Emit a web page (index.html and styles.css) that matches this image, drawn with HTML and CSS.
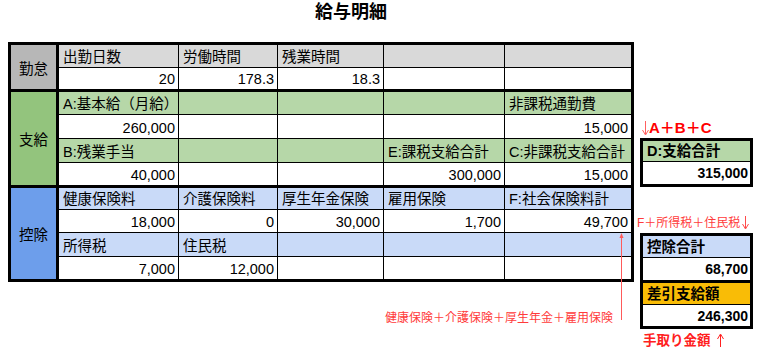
FILE: index.html
```html
<!DOCTYPE html>
<html lang="ja">
<head>
<meta charset="utf-8">
<title>給与明細</title>
<link rel="stylesheet" href="styles.css">
</head>
<body>
<main class="page">
  <h1 class="title">給与明細</h1>
  <div class="body">
    <div class="left">
      <div class="sheet">
        <div class="section sec-att">
          <div class="label grey">勤怠</div>
          <div class="cells">
            <div class="c h-grey">出勤日数</div>
            <div class="c h-grey">労働時間</div>
            <div class="c h-grey">残業時間</div>
            <div class="c h-grey"></div>
            <div class="c h-grey"></div>
            <div class="c n">20</div>
            <div class="c n">178.3</div>
            <div class="c n">18.3</div>
            <div class="c n"></div>
            <div class="c n"></div>
          </div>
        </div>
        <div class="section sec-pay">
          <div class="label green">支給</div>
          <div class="cells">
            <div class="c h-green">A:基本給（月給）</div>
            <div class="c h-green"></div>
            <div class="c h-green"></div>
            <div class="c h-green"></div>
            <div class="c h-green">非課税通勤費</div>
            <div class="c n">260,000</div>
            <div class="c n"></div>
            <div class="c n"></div>
            <div class="c n"></div>
            <div class="c n">15,000</div>
            <div class="c h-green">B:残業手当</div>
            <div class="c h-green"></div>
            <div class="c h-green"></div>
            <div class="c h-green">E:課税支給合計</div>
            <div class="c h-green">C:非課税支給合計</div>
            <div class="c n">40,000</div>
            <div class="c n"></div>
            <div class="c n"></div>
            <div class="c n">300,000</div>
            <div class="c n">15,000</div>
          </div>
        </div>
        <div class="section sec-ded">
          <div class="label blue">控除</div>
          <div class="cells">
            <div class="c h-blue">健康保険料</div>
            <div class="c h-blue">介護保険料</div>
            <div class="c h-blue">厚生年金保険</div>
            <div class="c h-blue">雇用保険</div>
            <div class="c h-blue">F:社会保険料計</div>
            <div class="c n">18,000</div>
            <div class="c n">0</div>
            <div class="c n">30,000</div>
            <div class="c n">1,700</div>
            <div class="c n">49,700</div>
            <div class="c h-blue">所得税</div>
            <div class="c h-blue">住民税</div>
            <div class="c h-blue"></div>
            <div class="c h-blue"></div>
            <div class="c h-blue"></div>
            <div class="c n">7,000</div>
            <div class="c n">12,000</div>
            <div class="c n"></div>
            <div class="c n"></div>
            <div class="c n"></div>
          </div>
        </div>
        <svg class="up-arrow" width="9" height="88" viewBox="0 0 9 88" aria-hidden="true">
          <line x1="4.5" y1="1" x2="4.5" y2="87" stroke="#ff5a5a" stroke-width="1"/>
          <path d="M4.5 0 L2.5 5 L6.5 5 Z" fill="#ff5a5a"/>
        </svg>
      </div>
      <div class="note-row">
        <p class="note">健康保険＋介護保険＋厚生年金＋雇用保険</p>
      </div>
    </div>
    <aside class="side">
      <p class="formula"><svg class="ico-arrow" width="7" height="14" viewBox="0 0 7 14" aria-hidden="true"><line x1="3.5" y1="0" x2="3.5" y2="13" stroke="#ff6060" stroke-width="1"/><path d="M0.5 9 L3.5 14 L6.5 9" fill="none" stroke="#ff6060" stroke-width="1"/></svg>A＋B＋C</p>
      <div class="box">
        <div class="pair">
          <div class="bh h-green tall-20">D:支給合計</div>
          <div class="bv tall-22">315,000</div>
        </div>
      </div>
      <p class="formula2">F＋所得税＋住民税<svg class="ico-arrow gap" width="7" height="13" viewBox="0 0 7 13" aria-hidden="true"><line x1="3.5" y1="0" x2="3.5" y2="12" stroke="#ff4a4a" stroke-width="1"/><path d="M0.5 8 L3.5 13 L6.5 8" fill="none" stroke="#ff4a4a" stroke-width="1"/></svg></p>
      <div class="box">
        <div class="pair">
          <div class="bh h-blue tall-21">控除合計</div>
          <div class="bv tall-22">68,700</div>
        </div>
        <div class="pair">
          <div class="bh orange tall-21">差引支給額</div>
          <div class="bv tall-21">246,300</div>
        </div>
      </div>
      <p class="takehome">手取り金額<svg class="ico-arrow gap2" width="7" height="13" viewBox="0 0 7 13" aria-hidden="true"><line x1="3.5" y1="1" x2="3.5" y2="13" stroke="#ff2020" stroke-width="1"/><path d="M0.5 5 L3.5 0 L6.5 5" fill="none" stroke="#ff2020" stroke-width="1"/></svg></p>
    </aside>
  </div>
</main>
</body>
</html>
```
FILE: styles.css
```css
* { box-sizing: border-box; }
html, body { margin: 0; padding: 0; background: #fff; }
body {
  font-family: "Liberation Sans", "Noto Sans CJK JP", sans-serif;
  color: #000;
  width: 758px;
  height: 352px;
  overflow: hidden;
}
.page { padding-left: 8px; }
.title {
  margin: 0 0 18px 0;
  padding-left: 307px;
  font-size: 18px;
  line-height: 24px;
  font-weight: bold;
}
.body { display: flex; align-items: flex-start; }
.left { width: 626px; }
.sheet {
  position: relative;
  width: 626px;
  border: 3px solid #000;
  background: #000;
  display: flex;
  flex-direction: column;
  gap: 3px;
}
.section { display: flex; gap: 3px; }
.label {
  width: 45px;
  display: flex;
  align-items: center;
  justify-content: center;
  font-size: 14.5px;
}
.grey { background: #b7b7b7; }
.green { background: #93c47d; }
.blue { background: #6d9eeb; }
.cells {
  display: grid;
  grid-template-columns: 119px 98px 105px 120px 126px;
  gap: 1px;
}
.sec-att .cells { grid-template-rows: 22px 21px; }
.sec-pay .cells { grid-template-rows: 22px 23px 23px 22px; }
.sec-ded .cells { grid-template-rows: 21px 22px 23px 22px; }
.c {
  display: flex;
  align-items: flex-end;
  padding: 0 3px 2px 4px;
  font-size: 14.5px;
  line-height: 16px;
  white-space: nowrap;
  background: #fff;
}
.c.n { justify-content: flex-end; padding-right: 3px; }
.h-grey { background: #d9d9d9; }
.h-green { background: #b6d7a8; }
.h-blue { background: #c9daf8; }
.orange { background: #f9bc06; }

.up-arrow {
  position: absolute;
  left: 606px;
  top: 188px;
}

.note-row { display: flex; justify-content: flex-end; }
.note {
  margin: 28px 21px 0 0;
  font-size: 12px;
  line-height: 16px;
  color: #ff3b3b;
  white-space: nowrap;
}

.side { width: 113px; margin-left: 6px; }
.ico-arrow { display: inline-block; vertical-align: -2px; }
.ico-arrow.gap { margin-left: 2px; }
.ico-arrow.gap2 { margin-left: 6px; }
.formula {
  margin: 76px 0 0 0;
  padding-left: 2px;
  font-size: 15px;
  line-height: 20px;
  font-weight: bold;
  color: #ff0000;
  white-space: nowrap;
}
.formula2 {
  margin: 28px 0 0 -3px;
  font-size: 12px;
  line-height: 16px;
  color: #ff3b3b;
  white-space: nowrap;
}
.box {
  border: 3px solid #000;
  background: #000;
  display: flex;
  flex-direction: column;
  gap: 3px;
}
.formula2 + .box { margin-top: 2px; }
.pair { display: flex; flex-direction: column; gap: 1px; }
.bh, .bv {
  display: flex;
  align-items: center;
  font-size: 14.5px;
  line-height: 16px;
  font-weight: bold;
  white-space: nowrap;
}
.bh { padding-left: 4px; }
.bv { background: #fff; justify-content: flex-end; padding-right: 2px; font-size: 14px; }
.tall-20 { height: 20px; }
.tall-21 { height: 21px; }
.tall-22 { height: 22px; }
.takehome {
  margin: 4px 0 0 3px;
  font-size: 13.5px;
  line-height: 16px;
  font-weight: bold;
  color: #ff2020;
  white-space: nowrap;
}
```
